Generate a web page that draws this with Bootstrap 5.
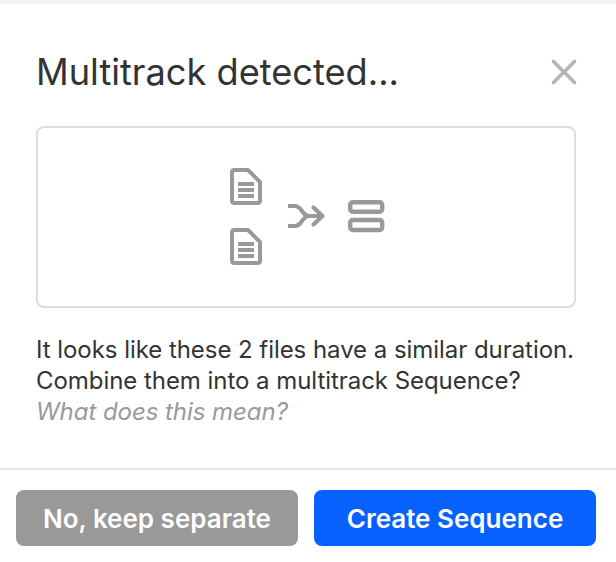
<!DOCTYPE html>
<html lang="en">
<head>
<meta charset="utf-8">
<title>Multitrack detected</title>
<link href="https://cdn.jsdelivr.net/npm/bootstrap@5.3.0/dist/css/bootstrap.min.css" rel="stylesheet">
<style>
html,body{height:100%;}
body{font-family:"Inter","Liberation Sans",sans-serif;background:#fff;color:#333;overflow:hidden;}
.dlg-strip{height:4px;background:#f2f2f2;}
.dlg-head{height:122px;padding:0 38px 0 36px;}
.dlg-title{font-size:36.2px;font-weight:400;line-height:44px;margin:0;color:#333;padding-top:46px;height:90px;box-sizing:border-box;}
.dlg-close{background:none;border:0;padding:0;width:28px;height:28px;margin-top:54px;line-height:0;}
.dlg-figure{margin:0 40px 0 36px;height:182px;border:2px solid #ddd;border-radius:8px;}
.dlg-text{margin:26px 36px 0;font-size:24px;line-height:31px;color:#333;height:134px;letter-spacing:-.05px;}
.dlg-link{color:#999;font-style:italic;display:block;}
.dlg-foot{border-top:2px solid #e5e5e5;padding:20px 20px 0 16px;gap:16px;}
.dlg-btn{flex:1 1 0;height:56px;border:0;border-radius:8px;color:#fff;font-size:26px;font-weight:600;padding:2px 0 0;line-height:1;}
.dlg-btn-muted,.dlg-btn-muted:hover{background:#999;color:#fff;}
.dlg-btn-main,.dlg-btn-main:hover{background:#0761ff;color:#fff;}
</style>
</head>
<body>
<div class="dlg-strip"></div>
<div class="dlg-head d-flex justify-content-between align-items-start">
  <h1 class="dlg-title">Multitrack detected...</h1>
  <button class="dlg-close" type="button" aria-label="Close">
    <svg width="28" height="28" viewBox="0 0 28 28" fill="none" stroke="#b4b4b4" stroke-width="3.6" stroke-linecap="round"><path d="M3.500 3.500 24.500 24.500M24.500 3.500 3.500 24.500"/></svg>
  </button>
</div>
<div class="dlg-figure d-flex align-items-center justify-content-center">
  <svg width="160" height="104" viewBox="226 165 160 104" fill="none" stroke="#999" stroke-width="4">
    <path d="M234.500 170H248L260 182V200.500Q260 203 257.500 203H234.500Q232 203 232 200.500V172.500Q232 170 234.500 170Z" stroke-linejoin="round"/>
    <path d="M238 184H254M238 190H254M238 196H254"/>
    <g transform="translate(0 60)">
      <path d="M234.500 170H248L260 182V200.500Q260 203 257.500 203H234.500Q232 203 232 200.500V172.500Q232 170 234.500 170Z" stroke-linejoin="round"/>
      <path d="M238 184H254M238 190H254M238 196H254"/>
    </g>
    <path d="M288 206H295C302 206 302 216 309 216H322M288 226H295C302 226 302 216 309 216" stroke-width="4.200"/>
    <path d="M313.500 207.500 322.500 216 313.500 224.500" stroke-width="4.200" stroke-linecap="round" stroke-linejoin="round"/>
    <rect x="350.200" y="202.200" width="32" height="9.600" rx="2.500" stroke-width="4.400"/>
    <rect x="350.200" y="220" width="32" height="10" rx="2.500" stroke-width="4.400"/>
  </svg>
</div>
<p class="dlg-text">It looks like these 2 files have a similar duration. Combine them into a multitrack Sequence?<a class="dlg-link text-decoration-none" href="#">What does this mean?</a></p>
<div class="dlg-foot d-flex">
  <button class="btn dlg-btn dlg-btn-muted" type="button">No, keep separate</button>
  <button class="btn dlg-btn dlg-btn-main" type="button">Create Sequence</button>
</div>
</body>
</html>
